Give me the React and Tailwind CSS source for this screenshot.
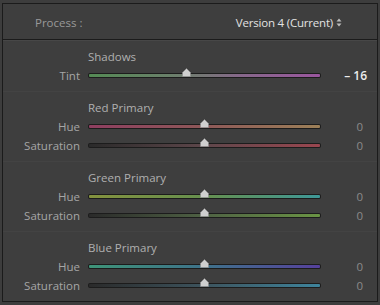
import React from "react";

const font = { fontFamily: '"Open Sans", "Noto Sans", sans-serif' };

function Thumb({ pos }) {
  return (
    <svg
      className="absolute top-[-5px]"
      style={{ left: pos - 4.5 }}
      width="9"
      height="9"
      viewBox="0 0 9 9"
    >
      <polygon points="4.5,0.5 8.5,4.5 8.5,8.5 0.5,8.5 0.5,4.5" fill="#cfcfcf" stroke="#8a8a8a" strokeWidth="0.6" />
    </svg>
  );
}

function Slider({ gradient, pos }) {
  return (
    <div className="relative w-[233px] h-[5px] rounded-[2px] bg-[#1c1c1c] p-px">
      <div className="h-[3px] w-full rounded-[1px]" style={{ background: gradient }} />
      <Thumb pos={pos} />
    </div>
  );
}

function Row({ label, gradient, pos = 116.5, value = "0", strong = false }) {
  return (
    <div className="flex h-[19px] items-center">
      <div className="w-[78px] pr-[1px] pt-[1px] text-right text-[11.5px] leading-none text-[#a6a6a6]">{label}</div>
      <div className="ml-[7px]">
        <Slider gradient={gradient} pos={pos} />
      </div>
      <div
        className={
          strong
            ? "ml-auto mr-[10px] pt-[1px] text-[12px] font-semibold leading-none text-[#ececec]"
            : "ml-auto mr-[14px] pt-[1px] text-[11.5px] leading-none text-[#8a8a8a]"
        }
      >
        {value}
      </div>
    </div>
  );
}

function Section({ title, children, last = false }) {
  return (
    <div className={last ? "pt-[5px] pb-[5px]" : "pt-[5px] pb-[6px] border-b border-[#434343]"}>
      <div className="flex h-[20px] items-center pl-[85px] pt-[1px] text-[11.5px] leading-none text-[#b0b0b0]">{title}</div>
      {children}
    </div>
  );
}

export default function App() {
  return (
    <div className="w-[380px] h-[305px] bg-[#3d3d3d] pl-[2px] pr-[2px] pt-[3px] pb-[3px]" style={font}>
      <div className="h-[299px] border border-[#1b1b1b] bg-[#3e3e3e] overflow-hidden">
        <div className="flex h-[36px] items-center pt-[2px] border-b border-[#1b1b1b]">
          <div className="pl-[32px] text-[11.5px] leading-none text-[#999999]">Process :</div>
          <div className="ml-auto mr-[35px] flex items-center gap-[3px] text-[11.5px] leading-none text-[#e2e2e2]">
            <span className="tracking-[-0.2px]">Version 4 (Current)</span>
            <svg width="6" height="9" viewBox="0 0 6 9">
              <polygon points="3,0.5 5.5,3.5 0.5,3.5" fill="#bdbdbd" />
              <polygon points="0.5,5.5 5.5,5.5 3,8.5" fill="#bdbdbd" />
            </svg>
          </div>
        </div>
        <div className="border-t border-[#474747]">
          <Section title="Shadows">
            <Row
              label="Tint"
              gradient="linear-gradient(90deg,#548a54,#6a806a 35%,#767676 50%,#86688a 65%,#9a569e)"
              pos={98}
              value="– 16"
              strong
            />
          </Section>
          <Section title="Red Primary">
            <Row label="Hue" gradient="linear-gradient(90deg,#8f3e60,#8e5858 50%,#9c8058)" />
            <Row label="Saturation" gradient="linear-gradient(90deg,#2a2a2a,#5e474b 50%,#9a464f)" />
          </Section>
          <Section title="Green Primary">
            <Row label="Hue" gradient="linear-gradient(90deg,#84923e,#66904e 50%,#3e9898)" />
            <Row label="Saturation" gradient="linear-gradient(90deg,#2a2a2a,#4f6244 50%,#6a9444)" />
          </Section>
          <Section title="Blue Primary" last>
            <Row label="Hue" gradient="linear-gradient(90deg,#3e9478,#3e728a 50%,#56409c)" />
            <Row label="Saturation" gradient="linear-gradient(90deg,#2a2a2a,#3d545e 50%,#3e849c)" />
          </Section>
        </div>
      </div>
    </div>
  );
}
